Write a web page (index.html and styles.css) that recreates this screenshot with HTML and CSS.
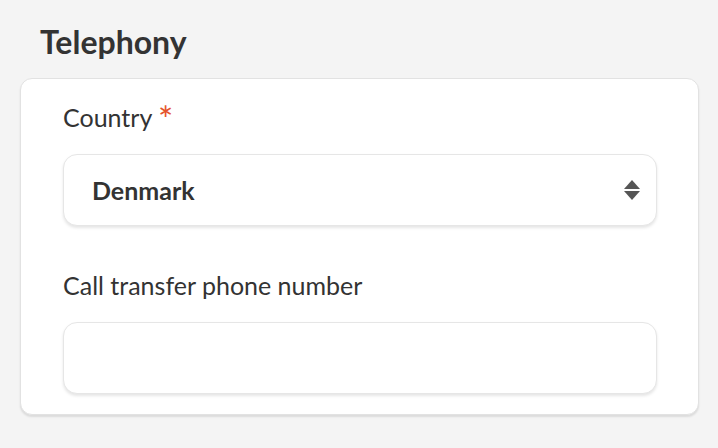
FILE: index.html
```html
<!DOCTYPE html>
<html lang="en">
<head>
<meta charset="utf-8">
<link rel="stylesheet" href="styles.css">
</head>
<body>
<main class="page">
  <h2 class="section-title">Telephony</h2>
  <section class="card">
    <div class="field">
      <label class="label">Country <span class="req">*</span></label>
      <div class="select">
        <span class="select-value">Denmark</span>
        <svg class="select-arrows" width="16" height="20" viewBox="0 0 16 20">
          <path d="M8 0 L16 9 L0 9 Z" fill="#555"/>
          <path d="M0 11 L16 11 L8 20 Z" fill="#555"/>
        </svg>
      </div>
    </div>
    <div class="field">
      <label class="label">Call transfer phone number</label>
      <div class="input"></div>
    </div>
  </section>
</main>
</body>
</html>
```
FILE: styles.css
```css
* { box-sizing: border-box; }
html, body {
  margin: 0;
  padding: 0;
  background: #f4f4f4;
  font-family: Lato, "Open Sans", sans-serif;
  color: #333;
}
.page {
  padding: 22px 19px 32px 20px;
}
.section-title {
  margin: 0 0 16px 20px;
  font-size: 32px;
  font-weight: 700;
  line-height: 40px;
  color: #333;
}
.card {
  background: #fff;
  border: 1px solid #e2e2e2;
  border-radius: 12px;
  box-shadow: 0 2px 2px rgba(0,0,0,0.10);
  padding: 22px 41px 20px 42px;
  display: flex;
  flex-direction: column;
  gap: 43px;
}
.field {
  display: flex;
  flex-direction: column;
  gap: 21px;
}
.label {
  font-size: 25px;
  line-height: 32px;
  color: #333;
}
.req {
  color: #e5532b;
  font-size: 36px;
  line-height: 20px;
  vertical-align: -6px;
}
.select, .input {
  height: 72px;
  background: #fff;
  border: 1px solid #e6e6e6;
  border-radius: 14px;
  box-shadow: 0 2px 3px rgba(0,0,0,0.10);
}
.select {
  display: flex;
  align-items: center;
  justify-content: space-between;
  padding: 0 16px 0 28px;
}
.select-value {
  font-size: 25px;
  font-weight: 700;
  color: #333;
}
.select-arrows {
  display: block;
}
```
